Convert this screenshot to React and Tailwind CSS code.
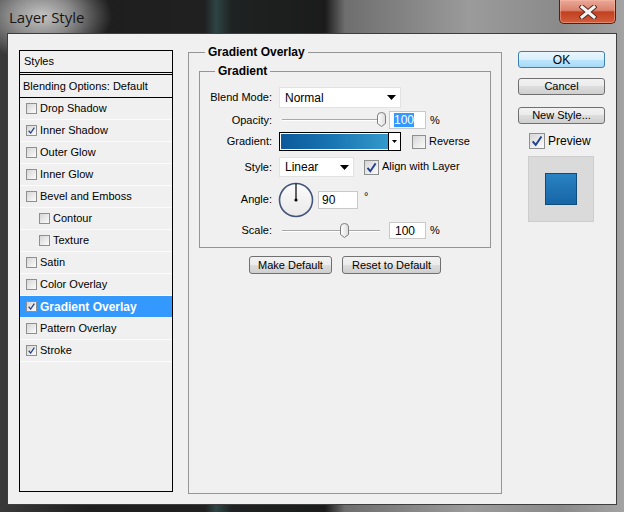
import React from "react";

// Layer Style dialog (Photoshop, Win7 frame)
const styleItems = [
  { label: "Drop Shadow" },
  { label: "Inner Shadow", checked: true },
  { label: "Outer Glow" },
  { label: "Inner Glow" },
  { label: "Bevel and Emboss" },
  { label: "Contour", indent: true },
  { label: "Texture", indent: true },
  { label: "Satin" },
  { label: "Color Overlay" },
  { label: "Gradient Overlay", checked: true, selected: true },
  { label: "Pattern Overlay" },
  { label: "Stroke", checked: true },
];

const CheckBox = ({ checked, className = "w-[11px] h-[11px]" }) => (
  <span
    className={`inline-flex shrink-0 items-center justify-center border border-[#8e8f8f] bg-linear-to-br from-[#d6d6d6] to-[#fcfcfc] ${className}`}
  >
    {checked && (
      <svg viewBox="0 0 12 12" className="w-full h-full">
        <path d="M2.3 6.3 L4.9 9.4 L9.8 2.2" fill="none" stroke="#22408e" strokeWidth="1.7" />
      </svg>
    )}
  </span>
);

const Arrow = () => (
  <svg width="9" height="5" viewBox="0 0 9 5">
    <path d="M0 0 H9 L4.5 5 Z" fill="#000" />
  </svg>
);

const Thumb = () => (
  <svg width="9" height="15" viewBox="0 0 9 15">
    <defs>
      <linearGradient id="thumbFill" x1="0" y1="0" x2="1" y2="0">
        <stop offset="0" stopColor="#ffffff" />
        <stop offset="1" stopColor="#dcdcdc" />
      </linearGradient>
    </defs>
    <path
      d="M0.5 4 Q0.5 0.5 4.5 0.5 Q8.5 0.5 8.5 4 L8.5 11.5 L4.5 14.5 L0.5 11.5 Z"
      fill="url(#thumbFill)"
      stroke="#7d7d7d"
    />
  </svg>
);

const Slider = ({ thumbClass }) => (
  <div className="relative w-[108px] h-[16px] shrink-0">
    <div className="absolute left-[3px] right-[7px] top-[7px] h-[2px] border-t border-[#a9a9a9] border-b border-b-white" />
    <div className={`absolute top-0 ${thumbClass}`}>
      <Thumb />
    </div>
  </div>
);

const Button = ({ children, className = "", primary }) => (
  <div
    className={`flex items-center justify-center rounded-[3px] border text-[11px] leading-none text-black ${
      primary
        ? "border-[#3c7fb1] bg-[linear-gradient(#eaf6fd,#d9f0fc_50%,#bee6fd_50%,#a7d9f5)]"
        : "border-[#707070] bg-[linear-gradient(#f2f2f2,#ebebeb_50%,#dddddd_50%,#cfcfcf)]"
    } ${className}`}
  >
    {children}
  </div>
);

const Label = ({ children }) => (
  <div className="w-[72px] shrink-0 text-right text-[11px] leading-none">{children}</div>
);

const App = () => {
  return (
    <div className="w-[624px] h-[512px] flex flex-col overflow-hidden font-['Liberation_Sans',Arial,sans-serif] text-black bg-[radial-gradient(ellipse_70px_45px_at_42px_16px,rgba(205,205,205,0.95)_0,rgba(170,170,170,0.75)_45%,transparent_100%),linear-gradient(90deg,#3a3a3a_0,#1e1e1e_90px,#202020_205px,#2e4444_216px,#1f2222_232px,#1b1b1b_325px,#6e6e6e_345px,#9b9b9b_470px,#8a8a8a_560px,#a3a3a3_624px)]">
      {/* Title bar */}
      <div className="h-[33px] flex items-start justify-between shrink-0">
        <div className="pl-[9px] pt-[8px] text-[15px] leading-[18px] text-[#161616] font-['Open_Sans',sans-serif]">
          Layer Style
        </div>
        <div className="mr-[8px] w-[57px] h-[24px] rounded-b-[5px] border border-t-0 border-[#4c2118] bg-[linear-gradient(#eaa999,#d9826d_45%,#c1401f_52%,#d35e3c)] flex items-center justify-center shadow-[inset_0_0_0_1px_rgba(255,190,170,0.45)]">
          <svg width="18" height="14" viewBox="0 0 18 14">
            <path d="M3 2 L15 12 M15 2 L3 12" stroke="#5b2a20" strokeWidth="5" strokeLinecap="square" />
            <path d="M3 2 L15 12 M15 2 L3 12" stroke="#f4f4f4" strokeWidth="3" strokeLinecap="square" />
          </svg>
        </div>
      </div>

      {/* Client area */}
      <div className="mx-[7px] h-[472px] shrink-0 border border-[#3e3e3e] bg-[#f0f0f0] flex items-start pl-[11px]">
        {/* Styles list */}
        <div className="mt-[16px] w-[154px] h-[442px] shrink-0 border border-black flex flex-col">
          <div className="h-[24px] shrink-0 border-b-[3px] border-double border-black pl-[4px] flex items-center text-[11px]">
            Styles
          </div>
          <div className="h-[23px] shrink-0 border-b border-black pl-[3px] flex items-center text-[11px]">
            Blending Options: Default
          </div>
          {styleItems.map((item) => (
            <div
              key={item.label}
              className={`h-[22px] shrink-0 border-b border-[#fbfbfb] flex items-center gap-[2px] ${
                item.indent ? "pl-[19px]" : "pl-[6px]"
              } ${item.selected ? "bg-[#3399ff] text-white font-bold text-[12px]" : "text-[11px]"}`}
            >
              <CheckBox checked={item.checked} />
              <span className="ml-[1px]">{item.label}</span>
            </div>
          ))}
        </div>

        {/* Gradient Overlay group */}
        <fieldset className="ml-[15px] mt-[11px] w-[314px] h-[449px] shrink-0 min-w-0 border border-[#959595] px-[10px] pt-[5px]">
          <legend className="ml-[6px] px-[3px] font-bold text-[12px] leading-[14px]">Gradient Overlay</legend>

          <fieldset className="w-[292px] min-w-0 border border-[#959595] pb-[8px]">
            <legend className="ml-[15px] px-[3px] font-bold text-[12px] leading-[14px]">Gradient</legend>

            <div className="mt-[9px] h-[21px] flex items-center">
              <Label>Blend Mode:</Label>
              <div className="ml-[7px] w-[122px] h-[21px] bg-white border border-[#e2e2e2] flex items-center justify-between pl-[5px] pr-[4px] text-[12px]">
                Normal
                <Arrow />
              </div>
            </div>

            <div className="mt-[3px] h-[18px] flex items-center">
              <Label>Opacity:</Label>
              <div className="ml-[7px] flex items-center">
                <Slider thumbClass="left-[98px]" />
              </div>
              <div className="ml-[2px] w-[37px] h-[18px] bg-white border border-[#c9c9c9] flex items-center pl-[4px] text-[12px]">
                <span className="bg-[#3399ff] text-white leading-[14px]">100</span>
              </div>
              <span className="ml-[4px] text-[11px]">%</span>
            </div>

            <div className="mt-[3px] h-[19px] flex items-center">
              <Label>Gradient:</Label>
              <div className="ml-[7px] w-[122px] h-[19px] border border-black bg-white flex">
                <div className="flex-1 m-[1px] mr-0 bg-linear-to-r from-[#0b5a9c] via-[#1a76b2] to-[#3399cb]" />
                <div className="w-[12px] border-l border-black flex items-center justify-center">
                  <svg width="5" height="3" viewBox="0 0 5 3">
                    <path d="M0 0 H5 L2.5 3 Z" fill="#000" />
                  </svg>
                </div>
              </div>
              <CheckBox className="ml-[11px] w-[14px] h-[14px]" />
              <span className="ml-[3px] text-[11px]">Reverse</span>
            </div>

            <div className="mt-[6px] h-[20px] flex items-center">
              <Label>Style:</Label>
              <div className="ml-[7px] w-[75px] h-[20px] bg-white border border-[#e2e2e2] flex items-center justify-between pl-[5px] pr-[4px] text-[12px]">
                Linear
                <Arrow />
              </div>
              <CheckBox checked className="ml-[10px] w-[15px] h-[15px]" />
              <span className="ml-[3px] text-[11px] -mt-[2px]">Align with Layer</span>
            </div>

            <div className="mt-[5px] h-[35px] flex items-center">
              <Label>Angle:</Label>
              <svg className="ml-[6px] shrink-0" width="36" height="36" viewBox="0 0 36 36">
                <defs>
                  <linearGradient id="dial" x1="0" y1="0" x2="0" y2="1">
                    <stop offset="0" stopColor="#fbfbfb" />
                    <stop offset="1" stopColor="#e9e9e9" />
                  </linearGradient>
                </defs>
                <circle cx="18" cy="18" r="16.5" fill="url(#dial)" stroke="#44557a" strokeWidth="1.6" />
                <line x1="18" y1="18" x2="18" y2="1.5" stroke="#000" strokeWidth="1.2" />
                <circle cx="18" cy="18" r="1.6" fill="#000" />
              </svg>
              <div className="ml-[4px] w-[40px] h-[18px] bg-white border border-[#c9c9c9] flex items-center pl-[3px] text-[12px]">
                90
              </div>
              <span className="ml-[6px] -mt-[7px] text-[11px]">°</span>
            </div>

            <div className="mt-[5px] h-[17px] flex items-center">
              <Label>Scale:</Label>
              <div className="ml-[7px] flex items-center">
                <Slider thumbClass="left-[61px]" />
              </div>
              <div className="ml-[2px] w-[37px] h-[17px] bg-white border border-[#c9c9c9] flex items-center pl-[5px] text-[12px]">
                100
              </div>
              <span className="ml-[4px] text-[11px]">%</span>
            </div>
          </fieldset>

          <div className="mt-[8px] flex justify-center gap-[10px]">
            <Button className="w-[83px] h-[18px]">Make Default</Button>
            <Button className="w-[99px] h-[18px]">Reset to Default</Button>
          </div>
        </fieldset>

        {/* Buttons column */}
        <div className="ml-[16px] mt-[17px] w-[87px] shrink-0 flex flex-col">
          <Button primary className="h-[17px] text-[12px]">OK</Button>
          <Button className="mt-[10px] h-[17px]">Cancel</Button>
          <Button className="mt-[12px] h-[17px]">New Style...</Button>
          <div className="mt-[8px] ml-[11px] flex items-center">
            <CheckBox checked className="w-[16px] h-[16px]" />
            <span className="ml-[3px] text-[12px]">Preview</span>
          </div>
          <div className="mt-[6px] ml-[10px] w-[66px] h-[66px] bg-[#dadada] border border-[#cdcdcd] flex items-center justify-center">
            <div className="w-[32px] h-[32px] border border-[#0f4c7e] bg-linear-to-b from-[#2a82c2] to-[#1666a6]" />
          </div>
        </div>
      </div>
    </div>
  );
};

export default App;
